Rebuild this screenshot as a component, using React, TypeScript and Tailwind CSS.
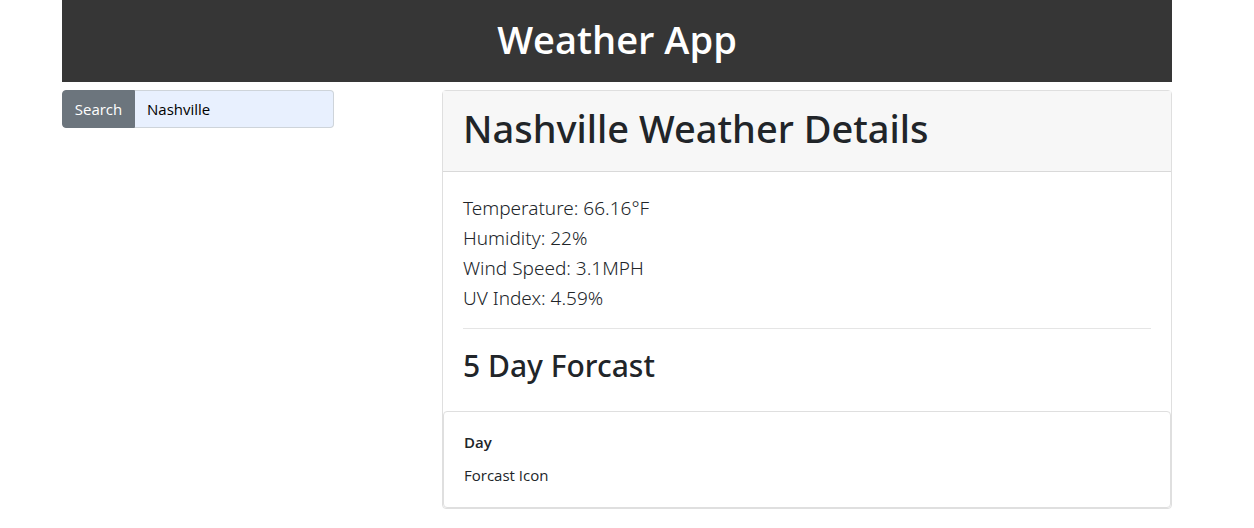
const details = [
  "Temperature: 66.16°F",
  "Humidity: 22%",
  "Wind Speed: 3.1MPH",
  "UV Index: 4.59%",
];

export default function App() {
  return (
    <div className="bg-white pb-5 pl-[62px] pr-[82px] font-['Open_Sans','Noto_Sans',sans-serif] text-[#212529]">
      <header className="bg-[#363636] pt-[15px] pb-[19px] text-center">
        <h1 className="text-[38px] leading-[48px] font-semibold text-white">Weather App</h1>
      </header>
      <div className="flex items-start pt-2">
        <form className="flex w-[272px] shrink-0" onSubmit={(e) => e.preventDefault()}>
          <button type="submit" className="h-[38px] w-[73px] rounded-l border border-[#6c757d] bg-[#6c757d] text-[15px] text-white">
            Search
          </button>
          <input
            type="text"
            aria-label="City"
            defaultValue="Nashville"
            className="h-[38px] min-w-0 flex-1 rounded-r border border-l-0 border-[#ced4da] bg-[#e8f0fe] px-3 text-[15px] text-black"
          />
        </form>
        <main className="ml-[108px] min-w-0 flex-1 rounded border border-[#dfdfdf]">
          <div className="border-b border-[#d9d9d9] bg-[#f7f7f7] px-5 pt-[13px] pb-[19px]">
            <h2 className="font-['Noto_Sans',sans-serif] text-[38px] leading-[48px] font-medium">Nashville Weather Details</h2>
          </div>
          <div className="px-5 pt-[21px] pb-[25px]">
            {details.map((line) => (
              <p key={line} className="font-['Noto_Sans',sans-serif] text-[19px] leading-[30px] font-light">{line}</p>
            ))}
            <hr className="mt-[15px] mb-[17px] border-[#e5e5e5]" />
            <h3 className="font-['Noto_Sans',sans-serif] text-[30px] leading-[40px] font-medium">5 Day Forcast</h3>
          </div>
          <section className="rounded border border-[#dfdfdf] p-5">
            <h4 className="mb-[11px] text-[15px] leading-5 font-semibold">Day</h4>
            <p className="text-[15px] leading-6">Forcast Icon</p>
          </section>
        </main>
      </div>
    </div>
  );
}
